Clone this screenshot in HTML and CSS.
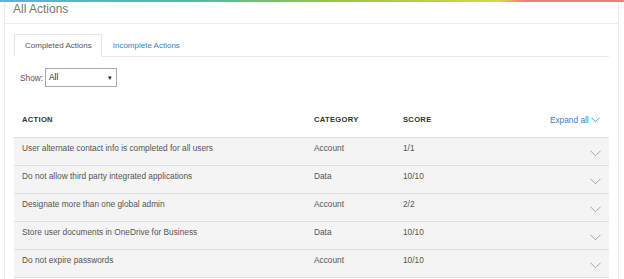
FILE: index.html
```html
<!DOCTYPE html>
<html lang="en">
<head>
    <meta charset="UTF-8">
    <title>All Actions</title>
    <link rel="stylesheet" href="styles.css">
</head>
<body>
    <div class="topbar"></div>
    <div class="page">
        <div class="page-title">All Actions</div>

        <div class="content">
            <!-- Tabs -->
            <div class="tabs">
                <span class="tab active">Completed Actions</span>
                <span class="tab">Incomplete Actions</span>
            </div>

            <div class="filter">
                <label>Show:</label>
                <div class="select">All <span class="caret">&#9662;</span></div>
            </div>

            <!-- Tabela de ações -->
            <div class="actions">
                <div class="row head">
                    <span>ACTION</span>
                    <span>CATEGORY</span>
                    <span>SCORE</span>
                    <span class="expand">Expand all
                        <svg width="9" height="6" viewBox="0 0 9 6"><path d="M0.5 0.8 L4.5 4.8 L8.5 0.8" fill="none" stroke="#3b7fc4" stroke-width="0.9"/></svg>
                    </span>
                </div>
                <div class="row">
                    <span>User alternate contact info is completed for all users</span>
                    <span>Account</span>
                    <span>1/1</span>
                    <span class="chev"><svg width="11" height="7" viewBox="0 0 11 7"><path d="M0.5 0.8 L5.5 5.8 L10.5 0.8" fill="none" stroke="#9a9a9a" stroke-width="0.9"/></svg></span>
                </div>
                <div class="row">
                    <span>Do not allow third party integrated applications</span>
                    <span>Data</span>
                    <span>10/10</span>
                    <span class="chev"><svg width="11" height="7" viewBox="0 0 11 7"><path d="M0.5 0.8 L5.5 5.8 L10.5 0.8" fill="none" stroke="#9a9a9a" stroke-width="0.9"/></svg></span>
                </div>
                <div class="row">
                    <span>Designate more than one global admin</span>
                    <span>Account</span>
                    <span>2/2</span>
                    <span class="chev"><svg width="11" height="7" viewBox="0 0 11 7"><path d="M0.5 0.8 L5.5 5.8 L10.5 0.8" fill="none" stroke="#9a9a9a" stroke-width="0.9"/></svg></span>
                </div>
                <div class="row">
                    <span>Store user documents in OneDrive for Business</span>
                    <span>Data</span>
                    <span>10/10</span>
                    <span class="chev"><svg width="11" height="7" viewBox="0 0 11 7"><path d="M0.5 0.8 L5.5 5.8 L10.5 0.8" fill="none" stroke="#9a9a9a" stroke-width="0.9"/></svg></span>
                </div>
                <div class="row">
                    <span>Do not expire passwords</span>
                    <span>Account</span>
                    <span>10/10</span>
                    <span class="chev"><svg width="11" height="7" viewBox="0 0 11 7"><path d="M0.5 0.8 L5.5 5.8 L10.5 0.8" fill="none" stroke="#9a9a9a" stroke-width="0.9"/></svg></span>
                </div>
            </div>
        </div>
    </div>
</body>
</html>
```
FILE: styles.css
```css
body {
    margin: 0;
    font-family: 'Liberation Sans', Arial, sans-serif;
    color: #444;
    background: #fff;
    overflow: hidden;
}

.topbar {
    height: 2px;
    background: linear-gradient(90deg, #5bb3e0 0%, #4fb8a8 30%, #9cc83c 55%, #d8d840 80%, #e88080 84%, #e88080 100%);
}

.page {
    margin: 0 5px 0 4px;
    border-left: 1px solid #ececec;
    border-right: 1px solid #ececec;
    height: 277px;
}

.page-title {
    font-size: 12px;
    color: #777;
    padding: 0 0 0 8px;
    height: 21px;
    line-height: 15px;
    border-bottom: 1px solid #ececec;
}

.content {
    padding: 10px 9px 0 9px;
}

.tabs {
    display: flex;
    border-bottom: 1px solid #eaeaea;
    font-size: 8px;
    height: 22px;
}

.tab {
    padding: 0 9px;
    line-height: 23px;
    color: #3b7fc4;
}

.tab.active {
    color: #555;
    border: 1px solid #e6e6e6;
    border-bottom: 1px solid #fff;
    margin-bottom: -1px;
    line-height: 22px;
    background: #fff;
    margin-right: 2px;
    padding: 0 9px 0 10px;
}

.filter {
    display: flex;
    align-items: center;
    margin: 11px 0 0 6px;
    font-size: 8.3px;
    color: #555;
}

.filter label {
    margin-right: 2px;
}

.select {
    width: 64px;
    height: 17px;
    border: 1px solid #aaa;
    line-height: 17px;
    padding: 0 3px;
    position: relative;
    color: #222;
}

.select .caret {
    position: absolute;
    right: 4px;
    top: 0;
    font-size: 7px;
}

.actions {
    margin-top: 13px;
}

.row {
    display: grid;
    grid-template-columns: 292px 89px 1fr 40px;
    align-items: center;
    padding-left: 8px;
    height: 27px;
    border-bottom: 1px solid #dedede;
    background: #f4f4f4;
    font-size: 8.3px;
    color: #555;
}

.row > span {
    align-self: start;
    padding-top: 5px;
}

.row.head {
    background: #fff;
    height: 37px;
    font-size: 7.6px;
    font-weight: bold;
    color: #333;
    letter-spacing: 0.3px;
}

.row.head > span {
    padding-top: 15px;
}

.row .expand {
    font-weight: normal;
    letter-spacing: 0;
    font-size: 8.3px;
    color: #3b7fc4;
    text-align: right;
    padding-right: 9px;
    white-space: nowrap;
    justify-self: end;
}

.chev {
    justify-self: end;
    padding-right: 8px;
}

.row > span.chev {
    padding-top: 11px;
}
```
